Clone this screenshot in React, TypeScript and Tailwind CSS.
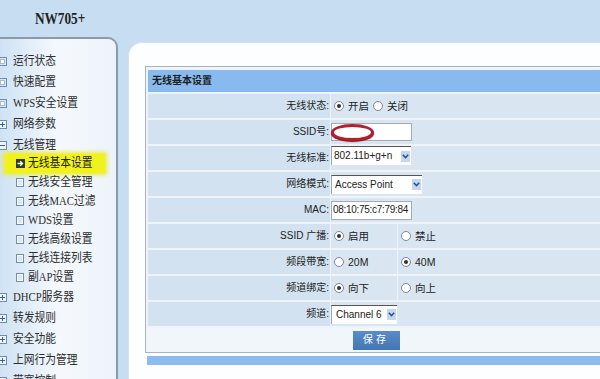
import React from "react";

type NavKind = "leaf" | "plus" | "minus";

const LeafIcon = () => (
  <span className="w-[9px] h-[9px] shrink-0 border border-[#6f8db0] bg-[#d6e5f5] flex items-center justify-center">
    <span className="w-[5px] h-[5px] bg-white border border-[#a7bdd6]"></span>
  </span>
);

const PlusIcon = ({ minus }: { minus?: boolean }) => (
  <span className="w-[9px] h-[9px] shrink-0 border border-[#6f8db0] bg-[#eef4fb] relative flex items-center justify-center">
    <span className="w-[5px] h-[1px] bg-[#34659c]"></span>
    {!minus && <span className="absolute w-[1px] h-[5px] bg-[#34659c]"></span>}
  </span>
);

const SubIcon = () => (
  <span className="w-[8px] h-[9px] shrink-0 border border-[#6f8db0] bg-white flex items-center justify-center">
    <span className="w-[4px] h-[5px] bg-[#dce8f5]"></span>
  </span>
);

const NavItem = ({ label, kind }: { label: string; kind: NavKind }) => (
  <div className="flex items-center h-[21px] -ml-[2px]">
    {kind === "leaf" ? <LeafIcon /> : <PlusIcon minus={kind === "minus"} />}
    <span className="ml-[6px] inline-block origin-left scale-x-[0.86] whitespace-nowrap text-[12.5px] leading-none text-[#2e2e2e]">
      {label}
    </span>
  </div>
);

const SubItem = ({ label, active }: { label: string; active?: boolean }) =>
  active ? (
    <div className="flex items-center h-[19px] ml-[5px] w-[100px] pl-[11px] bg-[#f1f21c] shadow-[0_0_4px_2px_#e9ec3c]">
      <span className="w-[9px] h-[9px] shrink-0 bg-[#2f3a2a] flex items-center justify-center">
        <svg width="7" height="7" viewBox="0 0 7 7">
          <path d="M0.5 3.5H5M3.2 1.3L5.5 3.5L3.2 5.7" stroke="#fff" strokeWidth="1.3" fill="none" />
        </svg>
      </span>
      <span className="ml-[3px] inline-block origin-left scale-x-[0.86] whitespace-nowrap text-[12.5px] leading-none text-[#222]">
        {label}
      </span>
    </div>
  ) : (
    <div className="flex items-center h-[19px] pl-[16px]">
      <SubIcon />
      <span className="ml-[4px] inline-block origin-left scale-x-[0.86] whitespace-nowrap text-[12.5px] leading-none text-[#2e2e2e]">
        {label}
      </span>
    </div>
  );

const Radio = ({ on, label }: { on?: boolean; label: string }) => (
  <span className="flex items-center">
    <span className="w-[10px] h-[10px] rounded-full border border-[#7d8894] bg-white flex items-center justify-center">
      {on && <span className="w-[4px] h-[4px] rounded-full bg-[#333]"></span>}
    </span>
    <span className="ml-[4px] text-[10.5px] leading-none text-[#222]">{label}</span>
  </span>
);

const Arrow = () => (
  <span className="w-[9px] h-[11px] mr-[1px] bg-[#c4d7ef] flex items-center justify-center">
    <svg width="7" height="5" viewBox="0 0 7 5">
      <path d="M0.8 0.8L3.5 3.6L6.2 0.8" stroke="#2c4f8c" strokeWidth="1.5" fill="none" />
    </svg>
  </span>
);

const Label = ({ text }: { text: string }) => (
  <div className="w-[183px] shrink-0 bg-[#d3e2f0] flex items-center justify-end pr-[1px] border-r border-[#eef4f9]">
    <span className="text-[10px] leading-none text-[#222] whitespace-nowrap">{text}</span>
  </div>
);

const Row = ({ label, children }: { label: string; children: React.ReactNode }) => (
  <div className="flex h-[26px] border-t-2 border-[#eef4f9]">
    <Label text={label} />
    <div className="flex-1 bg-[#d9e6f2] flex items-center">{children}</div>
  </div>
);

const SplitRow = ({ label, left, right }: { label: string; left: React.ReactNode; right: React.ReactNode }) => (
  <div className="flex h-[26px] border-t-2 border-[#eef4f9]">
    <Label text={label} />
    <div className="w-[67px] shrink-0 bg-[#d9e6f2] flex items-center pl-[3px] border-r border-[#eef4f9]">{left}</div>
    <div className="flex-1 bg-[#d9e6f2] flex items-center pl-[3px]">{right}</div>
  </div>
);

export default function App() {
  return (
    <div className="w-[600px] h-[379px] overflow-hidden bg-[#c7ddf1] flex flex-col font-['Liberation_Sans','Noto_Sans_CJK_SC',sans-serif]">
      {/* top title */}
      <div className="h-[37px] shrink-0 pl-[35px] flex items-center">
        <span className="inline-block origin-left scale-x-[0.78] font-['Liberation_Serif',serif] font-bold text-[17px] text-[#222] leading-none">
          NW705+
        </span>
      </div>

      <div className="flex flex-1 min-h-0">
        {/* side menu */}
        <div className="w-[118px] shrink-0 border-t-2 border-r-2 border-[#8a9aab] rounded-tr-[10px] bg-linear-to-r from-[#cfe2f4] via-[#f5f9fd] to-[#edf3fa] pt-[12px] overflow-hidden font-['Liberation_Serif','Noto_Sans_CJK_SC',serif]">
          <NavItem label="运行状态" kind="leaf" />
          <NavItem label="快速配置" kind="leaf" />
          <NavItem label="WPS安全设置" kind="leaf" />
          <NavItem label="网络参数" kind="plus" />
          <NavItem label="无线管理" kind="minus" />
          <div className="-mt-[2px]">
            <SubItem label="无线基本设置" active />
            <SubItem label="无线安全管理" />
            <SubItem label="无线MAC过滤" />
            <SubItem label="WDS设置" />
            <SubItem label="无线高级设置" />
            <SubItem label="无线连接列表" />
            <SubItem label="副AP设置" />
          </div>
          <NavItem label="DHCP服务器" kind="plus" />
          <NavItem label="转发规则" kind="plus" />
          <NavItem label="安全功能" kind="plus" />
          <NavItem label="上网行为管理" kind="plus" />
          <NavItem label="带宽控制" kind="plus" />
        </div>

        {/* main panel */}
        <div className="flex-1 ml-[10px] mt-[5px] bg-[#fdfeff] rounded-tl-[14px] border-l border-t border-[#d2e2f1] pt-[23px] pl-[16px]">
          <div className="border-t border-l border-b border-[#a9b4bf] pt-[3px] pl-[2px] bg-[#eef4f9]">
            <div className="h-[22px] bg-[#88baef] flex items-center pl-[4px]">
              <span className="text-[10px] font-bold text-[#1d1d1d] leading-none">无线基本设置</span>
            </div>

            <Row label="无线状态:">
              <div className="flex items-center pl-[3px] gap-[4px]">
                <Radio on label="开启" />
                <Radio label="关闭" />
              </div>
            </Row>

            <Row label="SSID号:">
              <div className="relative w-[81px] h-[18px] bg-white border border-[#a3abb5]">
                <span className="absolute -left-[1px] top-0 w-[43px] h-[17px] rounded-[50%] border-[3px] border-[#b3202c] bg-white shadow-[0_1px_1px_#7a1018]"></span>
              </div>
            </Row>

            <Row label="无线标准:">
              <div className="self-start w-[80px] h-[19px] bg-white border-t border-l border-[#555] border-l-[#9aa6b2] flex items-center justify-between">
                <span className="pl-[2px] text-[10px] leading-none text-[#222]">802.11b+g+n</span>
                <Arrow />
              </div>
            </Row>

            <Row label="网络模式:">
              <div className="w-[91px] h-[19px] bg-white border-t border-l border-[#555] border-l-[#9aa6b2] flex items-center justify-between">
                <span className="pl-[3px] text-[10px] leading-none text-[#222]">Access Point</span>
                <Arrow />
              </div>
            </Row>

            <Row label="MAC:">
              <div className="w-[81px] h-[19px] bg-white border border-[#a3abb5] flex items-center overflow-hidden">
                <span className="pl-[1px] text-[10px] tracking-[-0.3px] leading-none text-[#222] whitespace-nowrap">08:10:75:c7:79:84</span>
              </div>
            </Row>

            <SplitRow label="SSID 广播:" left={<Radio on label="启用" />} right={<Radio label="禁止" />} />
            <SplitRow label="频段带宽:" left={<Radio label="20M" />} right={<Radio on label="40M" />} />
            <SplitRow label="频道绑定:" left={<Radio on label="向下" />} right={<Radio label="向上" />} />

            <Row label="频道:">
              <div className="w-[66px] h-[19px] bg-white border-t border-l border-[#555] border-l-[#9aa6b2] flex items-center justify-between">
                <span className="pl-[4px] text-[10px] leading-none text-[#222]">Channel 6</span>
                <Arrow />
              </div>
            </Row>

            <div className="flex h-[26px] border-t-2 border-[#eef4f9] bg-[#f1f6fb] items-center justify-center">
              <button className="ml-[4px] w-[47px] h-[19px] bg-linear-to-b from-[#5a8cc9] to-[#4475b4] text-white text-[10px] tracking-[3px] leading-none">
                保存
              </button>
            </div>
          </div>
          <div className="mt-[3px] ml-[2px] h-[9px] bg-[#8cbcef]"></div>
        </div>
      </div>
    </div>
  );
}
